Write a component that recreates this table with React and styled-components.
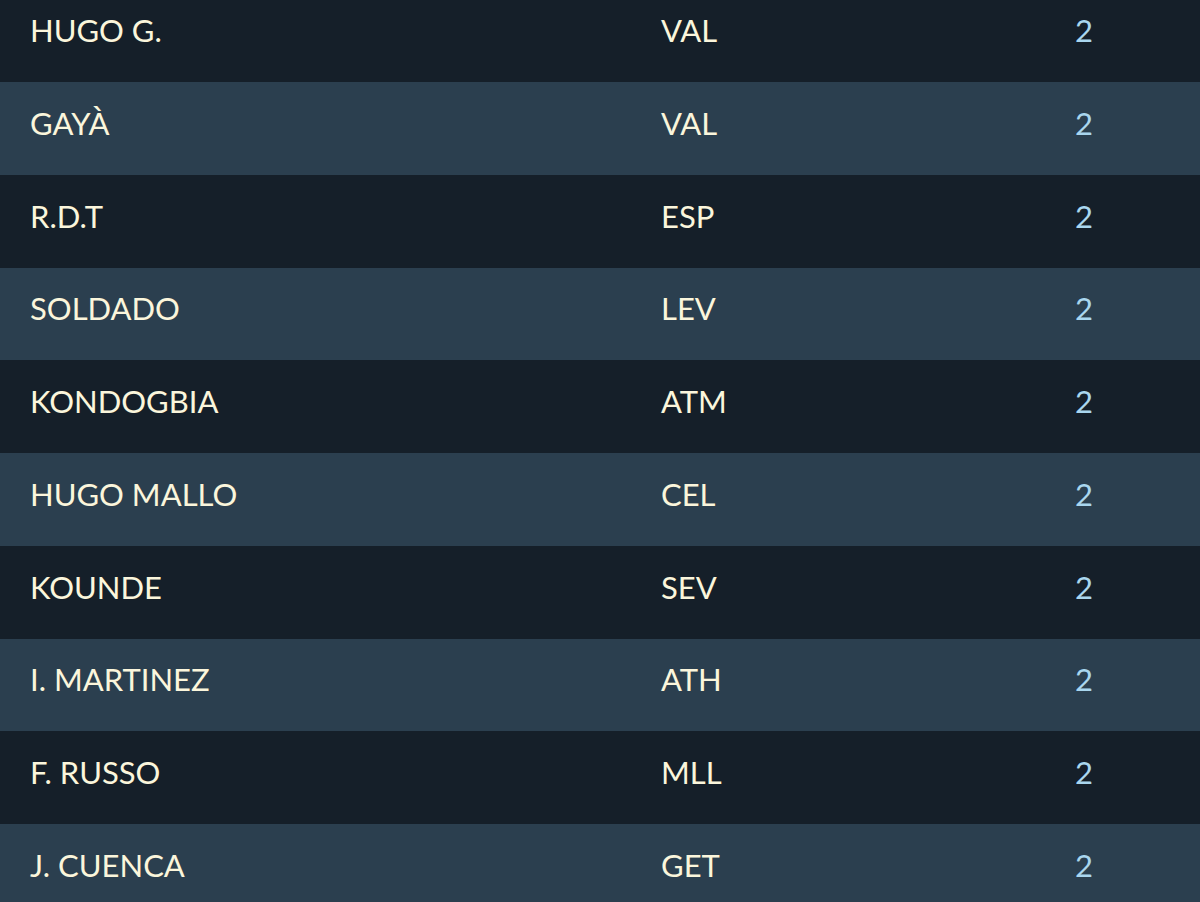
import React from "react";
import styled, { createGlobalStyle } from "styled-components";

const Global = createGlobalStyle`
  html, body { margin: 0; padding: 0; background: #151f29; overflow: hidden; }
  * { box-sizing: border-box; }
`;

const Table = styled.div`
  display: flex;
  flex-direction: column;
  margin-top: -10.75px;
  width: 1200px;
  font-family: Lato, "Open Sans", sans-serif;
`;

const Row = styled.div`
  display: grid;
  grid-template-columns: 631px 414px 1fr;
  align-items: center;
  height: 92.75px;
  padding: 0 0 10px 30px;
  background: ${(p) => (p.$alt ? "#2b3f4f" : "#151f29")};
`;

const Cell = styled.div`
  font-size: 31px;
  line-height: 1;
  color: ${(p) => (p.$num ? "#a9d6ee" : "#fbf6dc")};
  letter-spacing: 0;
`;

const data = [
  ["HUGO G.", "VAL", 2],
  ["GAYÀ", "VAL", 2],
  ["R.D.T", "ESP", 2],
  ["SOLDADO", "LEV", 2],
  ["KONDOGBIA", "ATM", 2],
  ["HUGO MALLO", "CEL", 2],
  ["KOUNDE", "SEV", 2],
  ["I. MARTINEZ", "ATH", 2],
  ["F. RUSSO", "MLL", 2],
  ["J. CUENCA", "GET", 2],
];

export default function App() {
  return (
    <>
      <Global />
      <Table>
        {data.map(([name, team, n], i) => (
          <Row key={i} $alt={i % 2 === 1}>
            <Cell>{name}</Cell>
            <Cell>{team}</Cell>
            <Cell $num>{n}</Cell>
          </Row>
        ))}
      </Table>
    </>
  );
}
